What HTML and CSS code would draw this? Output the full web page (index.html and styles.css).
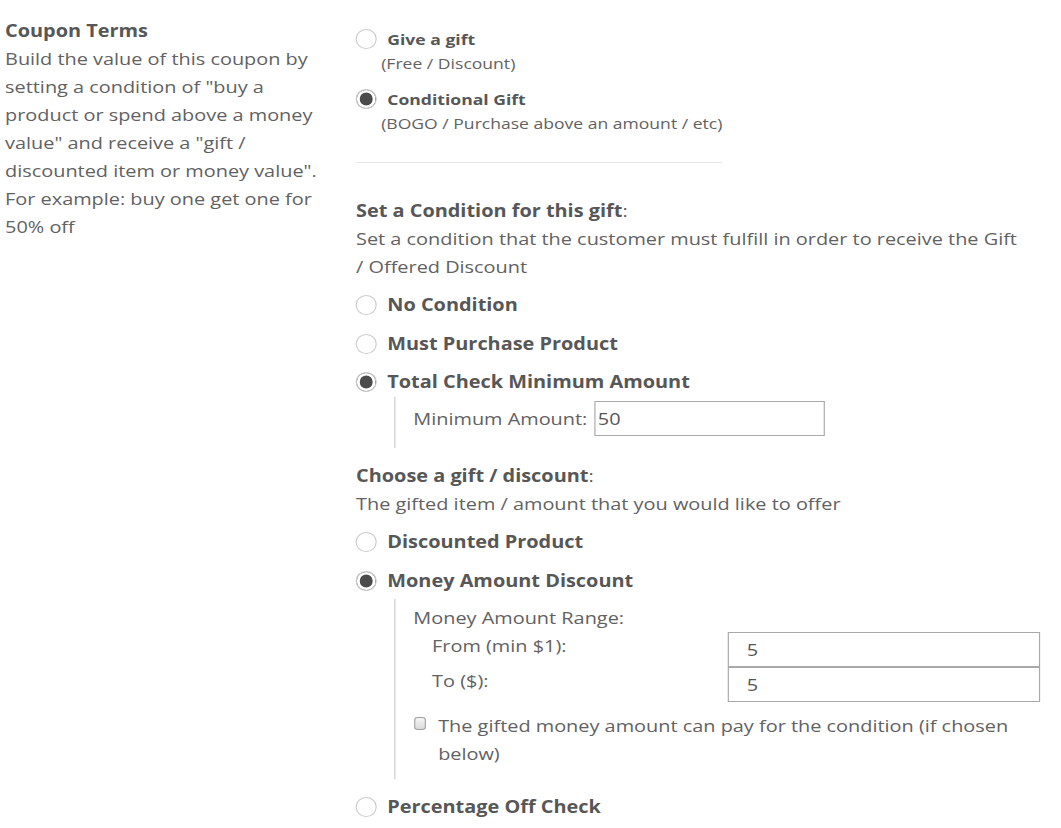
FILE: index.html
```html
<!DOCTYPE html>
<html lang="en">
<head>
<meta charset="utf-8">
<title>Coupon Terms</title>
<link rel="stylesheet" href="styles.css">
</head>
<body>
<div class="stage">
  <aside class="side">
    <div class="side-title">Coupon Terms</div>
    <p class="side-text">Build the value of this coupon by setting a condition of "buy a product or spend above a money value" and receive a "gift / discounted item or money value". For example: buy one get one for 50% off</p>
  </aside>

  <main class="main">
    <div class="choice">
      <div class="choice-row"><span class="radio"></span><span class="choice-label">Give a gift</span></div>
      <div class="choice-sub">(Free / Discount)</div>
    </div>
    <div class="choice">
      <div class="choice-row"><span class="radio on"></span><span class="choice-label">Conditional Gift</span></div>
      <div class="choice-sub">(BOGO / Purchase above an amount / etc)</div>
    </div>

    <div class="divider"></div>

    <section class="section first">
      <div class="section-title">Set a Condition for this gift<span class="colon">:</span></div>
      <div class="section-desc">Set a condition that the customer must fulfill in order to receive the Gift / Offered Discount</div>
      <div class="opts">
        <div class="opt-row"><span class="radio"></span><span>No Condition</span></div>
        <div class="opt-row"><span class="radio"></span><span>Must Purchase Product</span></div>
        <div class="opt-group">
          <div class="opt-row"><span class="radio on"></span><span>Total Check Minimum Amount</span></div>
          <div class="nest nest-min">
            <div class="min-line"><span>Minimum Amount:</span><input class="field field-min" type="text" value="50"></div>
          </div>
        </div>
      </div>
    </section>

    <section class="section second">
      <div class="section-title">Choose a gift / discount<span class="colon">:</span></div>
      <div class="section-desc">The gifted item / amount that you would like to offer</div>
      <div class="opts">
        <div class="opt-row"><span class="radio"></span><span>Discounted Product</span></div>
        <div class="opt-group">
          <div class="opt-row"><span class="radio on"></span><span>Money Amount Discount</span></div>
          <div class="nest nest-money">
            <div class="range-title">Money Amount Range:</div>
            <div class="range-grid">
              <span class="range-label">From (min $1):</span>
              <input class="field field-range" type="text" value="5">
              <span class="range-label">To ($):</span>
              <input class="field field-range" type="text" value="5">
            </div>
            <label class="check-row"><span class="checkbox"></span><span class="check-text">The gifted money amount can pay for the condition (if chosen below)</span></label>
          </div>
        </div>
        <div class="opt-row after-nest"><span class="radio"></span><span>Percentage Off Check</span></div>
      </div>
    </section>
  </main>
</div>
</body>
</html>
```

FILE: styles.css
```css
html, body {
  margin: 0;
  padding: 0;
  background: #ffffff;
  overflow: hidden;
}

.stage {
  display: flex;
  align-items: flex-start;
  width: 907px;
  transform: scaleX(1.17);
  transform-origin: 0 0;
  font-family: "Open Sans", "Liberation Sans", sans-serif;
  font-size: 17px;
  color: #626262;
}

/* left column */
.side {
  flex: none;
  width: 280px;
  padding: 17px 0 0 4.3px;
  line-height: 28px;
}

.side-title {
  font-weight: 700;
  color: #575757;
}

.side-text {
  margin: 0;
}

/* right column */
.main {
  flex: none;
  width: 586px;
  margin-left: 20px;
  padding-top: 27px;
}

.radio {
  flex: none;
  width: 18.5px;
  height: 20px;
  margin-left: -0.4px;
  box-sizing: border-box;
  border: 1px solid #cccccc;
  border-radius: 50%;
  background: #ffffff;
}

.radio.on {
  background: #4b4b4b;
  box-shadow: inset 0 0 0 2.5px #ffffff;
}

.choice + .choice {
  margin-top: 12px;
}

.choice-row {
  display: flex;
  align-items: center;
  gap: 8.6px;
  line-height: 24px;
}

.choice-label {
  font-size: 15px;
  font-weight: 700;
  color: #575757;
}

.choice-sub {
  font-size: 15px;
  line-height: 24px;
  margin-left: 21.5px;
}

.divider {
  width: 313px;
  height: 1px;
  background: #e6e6e6;
  margin-top: 27px;
}

.section.first {
  margin-top: 34px;
}

.section.second {
  margin-top: 14px;
}

.section-title {
  font-weight: 700;
  line-height: 28px;
  color: #575757;
}

.colon {
  font-weight: 400;
}

.section-desc {
  line-height: 28px;
  max-width: 575px;
}

.opts {
  display: flex;
  flex-direction: column;
  gap: 10.5px;
  margin-top: 10px;
}

.opt-row {
  display: flex;
  align-items: center;
  gap: 8.6px;
  line-height: 28px;
  font-weight: 700;
  color: #575757;
}

.opt-row.after-nest {
  margin-top: 3.5px;
}

.nest {
  margin-left: 32.6px;
  border-left: 1px solid #cccccc;
  padding-left: 15.4px;
}

.nest-min {
  margin-top: 1px;
  padding-top: 4px;
  padding-bottom: 12px;
}

.min-line {
  display: flex;
  align-items: center;
  gap: 6px;
}

.field {
  box-sizing: border-box;
  height: 35px;
  margin: 0;
  border: 1px solid #a9a9a9;
  border-radius: 0;
  background: #ffffff;
  font-family: "Open Sans", "Liberation Sans", sans-serif;
  font-size: 17px;
  color: #555555;
  outline: none;
}

.field-min {
  width: 196.6px;
  padding: 0 2px;
}

.nest-money {
  margin-top: 4px;
  padding-top: 5px;
  padding-bottom: 11px;
}

.range-title {
  line-height: 28px;
}

.range-grid {
  display: grid;
  grid-template-columns: 253px 267px;
  grid-auto-rows: 35px;
  margin-left: 16px;
}

.range-label {
  line-height: 28px;
  align-self: start;
}

.field-range {
  width: 267px;
  padding: 0 15px;
}

.check-row {
  display: flex;
  align-items: flex-start;
  gap: 10.5px;
  margin-top: 10px;
  line-height: 28px;
}

.checkbox {
  flex: none;
  width: 10px;
  height: 13px;
  margin-top: 5px;
  margin-left: 0.7px;
  box-sizing: border-box;
  border: 1px solid #a0a0a0;
  border-radius: 3px;
  background: linear-gradient(#f6f6f6, #dadada);
}

.check-text {
  flex: 1;
}
```
